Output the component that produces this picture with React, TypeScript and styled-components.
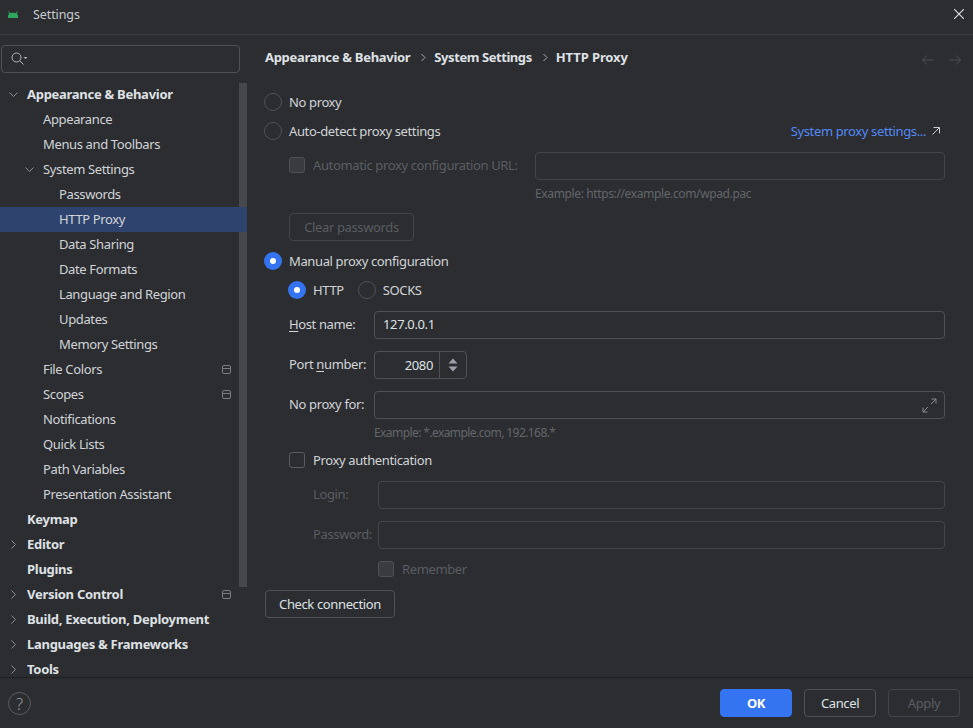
import React from "react";
import styled, { createGlobalStyle } from "styled-components";

const Global = createGlobalStyle`
  html, body { margin: 0; padding: 0; background: #2b2d30; }
  body { font-family: "Noto Sans", "Open Sans", "Liberation Sans", sans-serif; font-size: 13px; letter-spacing: -0.37px; color: #dfe1e5; }
  * { box-sizing: border-box; }
`;

const Window = styled.div`
  width: 973px; height: 728px; display: flex; flex-direction: column; overflow: hidden; background: #2b2d30;
`;
const TitleBar = styled.header`
  height: 35px; flex: none; display: flex; align-items: center; border-bottom: 1px solid #393b40; padding: 0 9px 6px 8px;
`;
const TitleText = styled.span`
  margin-left: 15px; font-size: 12.5px; letter-spacing: -0.1px; color: #c9cbd0; flex: 1;
`;
const Body = styled.div`
  flex: 1; min-height: 0; display: flex;
`;
const Sidebar = styled.aside`
  width: 247px; flex: none; display: flex; flex-direction: column; min-height: 0;
`;
const SearchBox = styled.div`
  margin: 10px 0 0 1px; width: 239px; height: 28px; flex: none; border: 1px solid #4e5157; border-radius: 4px; display: flex; align-items: center; padding-left: 9px;
`;
const TreeWrap = styled.div`
  position: relative; flex: 1; min-height: 0; overflow: hidden; margin-top: 9px;
`;
const ScrollThumb = styled.div`
  position: absolute; left: 239px; top: 1px; width: 8px; height: 504px; background: #47484b;
`;
const Row = styled.div<{ $depth: number; $selected?: boolean }>`
  position: relative; height: 25px; display: flex; align-items: center; padding: 0 0 2px ${(p) => 27 + p.$depth * 16}px;
  background: ${(p) => (p.$selected ? "#2e436e" : "transparent")};
  white-space: nowrap;
`;
const RowLabel = styled.span<{ $bold?: boolean }>`
  font-weight: ${(p) => (p.$bold ? 700 : 400)}; font-size: 13px; color: ${(p) => (p.$bold ? "#dfe1e5" : "#d2d4d9")};
  letter-spacing: ${(p) => (p.$bold ? "-0.28px" : "-0.37px")};
`;
const Chevron = styled.svg<{ $depth: number }>`
  position: absolute; left: ${(p) => 8 + p.$depth * 16}px; top: 7px;
`;
const BoxIcon = styled.svg`
  position: absolute; left: 222px; top: 8px;
`;
const Main = styled.main`
  flex: 1; min-width: 0; display: flex; flex-direction: column; padding: 0 28px 0 18px;
`;
const Breadcrumbs = styled.div`
  height: 20px; margin-top: 12px; flex: none; display: flex; align-items: center; font-weight: 700; color: #dfe1e5;
`;
const Crumb = styled.span<{ $spacing: number }>`
  letter-spacing: ${(p) => p.$spacing}px;
`;
const CrumbSep = styled.svg`
  margin: 0 8px 0 10px;
`;
const NavArrows = styled.div`
  margin-left: auto; margin-right: -17px; display: flex; gap: 13px; margin-top: 6px;
`;
const OptionRow = styled.div<{ $top: number; $indent?: number }>`
  display: flex; align-items: center; height: 20px; margin-top: ${(p) => p.$top}px; padding-left: ${(p) => p.$indent ?? 0}px; flex: none;
`;
const Radio = styled.span<{ $on?: boolean; $gap?: number }>`
  width: 18px; height: 18px; border-radius: 50%; flex: none; margin-left: ${(p) => p.$gap ?? -1}px; margin-right: 7px;
  display: inline-flex; align-items: center; justify-content: center;
  border: ${(p) => (p.$on ? "none" : "1.5px solid #4e5157")};
  background: ${(p) => (p.$on ? "#3574f0" : "transparent")};
  &::after { content: ""; width: 6px; height: 6px; border-radius: 50%; background: ${(p) => (p.$on ? "#ffffff" : "transparent")}; }
`;
const Check = styled.span<{ $off?: boolean }>`
  width: 16px; height: 16px; border-radius: 3px; flex: none; margin-right: 8px;
  border: 1px solid ${(p) => (p.$off ? "#4e5157" : "#5a5d63")};
  background: ${(p) => (p.$off ? "#393b40" : "transparent")};
`;
const Label = styled.span<{ $off?: boolean }>`
  color: ${(p) => (p.$off ? "#5a5d63" : "#d2d4d9")}; white-space: nowrap;
`;
const FieldLabel = styled(Label)`
  padding-bottom: 2px;
`;
const Spacer = styled.span`flex: 1;`;
const Link = styled.span`
  color: #548af7; display: inline-flex; align-items: center; gap: 6px; margin-right: 5px;
`;
const FieldRow = styled.div<{ $top: number; $indent: number; $label: number }>`
  display: grid; grid-template-columns: ${(p) => p.$label}px 1fr; align-items: center; height: 28px; flex: none;
  margin-top: ${(p) => p.$top}px; padding-left: ${(p) => p.$indent}px;
`;
const CheckField = styled.div`
  display: flex; align-items: center; padding-bottom: 2px;
`;
const Input = styled.div<{ $off?: boolean }>`
  height: 28px; border: 1px solid ${(p) => (p.$off ? "#43454a" : "#4e5157")}; border-radius: 4px; display: flex; align-items: center; padding: 0 8px 2px; color: #dfe1e5; position: relative;
`;
const Expand = styled.svg`
  position: absolute; right: 7px; top: 6px;
`;
const Spinner = styled.div`
  width: 93px; height: 28px; border: 1px solid #4e5157; border-radius: 4px; display: flex; align-items: stretch;
`;
const SpinValue = styled.span`
  flex: 1; display: flex; align-items: center; justify-content: flex-end; padding: 0 6px 1px 0; color: #dfe1e5;
`;
const SpinButton = styled.span`
  width: 27px; border-left: 1px solid #4e5157; display: flex; align-items: center; justify-content: center;
`;
const Hint = styled.div<{ $top: number; $indent: number; $spacing: number }>`
  height: 16px; line-height: 16px; font-size: 12px; color: #63666c; flex: none; letter-spacing: ${(p) => p.$spacing}px;
  margin-top: ${(p) => p.$top}px; padding-left: ${(p) => p.$indent}px; white-space: nowrap;
`;
const Button = styled.button<{ $off?: boolean; $primary?: boolean; $w: number }>`
  width: ${(p) => p.$w}px; height: 28px; padding: 0 0 1px; border-radius: 4px; font: inherit; letter-spacing: inherit; flex: none;
  border: 1px solid ${(p) => (p.$primary ? "#3574f0" : p.$off ? "#43454a" : "#4e5157")};
  background: ${(p) => (p.$primary ? "#3574f0" : "transparent")};
  color: ${(p) => (p.$primary ? "#ffffff" : p.$off ? "#5a5d63" : "#dfe1e5")};
  font-weight: ${(p) => (p.$primary ? 700 : 400)};
`;
const ButtonSlot = styled.div<{ $top: number; $indent: number }>`
  margin-top: ${(p) => p.$top}px; padding-left: ${(p) => p.$indent}px; flex: none;
`;
const Footer = styled.footer`
  height: 51px; flex: none; border-top: 1px solid #1e1f22; display: flex; align-items: center; padding: 0 13px 0 8px; gap: 12px;
`;
const Help = styled.span`
  width: 23px; height: 23px; border-radius: 50%; border: 1px solid #5a5d63; color: #9da0a8; display: flex; align-items: center; justify-content: center; font-size: 16px; font-weight: 300; margin-right: auto; margin-top: 1px;
`;
const Underlined = styled.span`text-decoration: underline; text-underline-offset: 2px;`;

const ChevronDown = ({ depth }: { depth: number }) => (
  <Chevron $depth={depth} width="11" height="11" viewBox="0 0 11 11" fill="none">
    <path d="M1.500 3.500 5.500 7.500 9.500 3.500" stroke="#8b8e94" strokeWidth="1" />
  </Chevron>
);
const ChevronRight = ({ depth }: { depth: number }) => (
  <Chevron $depth={depth} width="11" height="11" viewBox="0 0 11 11" fill="none">
    <path d="M3.500 1.500 7.500 5.500 3.500 9.500" stroke="#8b8e94" strokeWidth="1" />
  </Chevron>
);
const Box = () => (
  <BoxIcon width="10" height="10" viewBox="0 0 10 10" fill="none">
    <rect x="0.5" y="0.5" width="8" height="8" rx="1.5" stroke="#7a7d83" />
    <path d="M0.5 3.500h8" stroke="#7a7d83" />
  </BoxIcon>
);
const Sep = () => (
  <CrumbSep width="6" height="9" viewBox="0 0 6 9" fill="none">
    <path d="M1.500 1 5 4.500 1.500 8" stroke="#a8abb0" />
  </CrumbSep>
);

type Item = { label: string; depth: number; bold?: boolean; open?: boolean; closed?: boolean; selected?: boolean; box?: boolean };
const items: Item[] = [
  { label: "Appearance & Behavior", depth: 0, bold: true, open: true },
  { label: "Appearance", depth: 1 },
  { label: "Menus and Toolbars", depth: 1 },
  { label: "System Settings", depth: 1, open: true },
  { label: "Passwords", depth: 2 },
  { label: "HTTP Proxy", depth: 2, selected: true },
  { label: "Data Sharing", depth: 2 },
  { label: "Date Formats", depth: 2 },
  { label: "Language and Region", depth: 2 },
  { label: "Updates", depth: 2 },
  { label: "Memory Settings", depth: 2 },
  { label: "File Colors", depth: 1, box: true },
  { label: "Scopes", depth: 1, box: true },
  { label: "Notifications", depth: 1 },
  { label: "Quick Lists", depth: 1 },
  { label: "Path Variables", depth: 1 },
  { label: "Presentation Assistant", depth: 1 },
  { label: "Keymap", depth: 0, bold: true },
  { label: "Editor", depth: 0, bold: true, closed: true },
  { label: "Plugins", depth: 0, bold: true },
  { label: "Version Control", depth: 0, bold: true, closed: true, box: true },
  { label: "Build, Execution, Deployment", depth: 0, bold: true, closed: true },
  { label: "Languages & Frameworks", depth: 0, bold: true, closed: true },
  { label: "Tools", depth: 0, bold: true, closed: true },
];

export default function App() {
  return (
    <Window>
      <Global />
      <TitleBar>
        <svg width="10" height="7" viewBox="0 0 10 7" fill="#2fa65a">
          <path d="M0 7V4.500L1 3 .3 .6l.7-.3L2 2.200C3.200 1.700 6.800 1.700 8 2.200L9 .3l.7.3L9 3l1 1.500V7Z" />
        </svg>
        <TitleText>Settings</TitleText>
        <svg width="10" height="10" viewBox="0 0 10 10" fill="none">
          <path d="M0 0 10 10M10 0 0 10" stroke="#dfe1e5" strokeWidth="1.100" />
        </svg>
      </TitleBar>
      <Body>
        <Sidebar>
          <SearchBox>
            <svg width="17" height="14" viewBox="0 0 17 14" fill="none">
              <circle cx="5.500" cy="5.500" r="4.500" stroke="#b4b8bf" />
              <path d="M9 9l3.500 3.500" stroke="#b4b8bf" />
              <path d="M12.500 5h4L14.500 7Z" fill="#b4b8bf" />
            </svg>
          </SearchBox>
          <TreeWrap>
            <ScrollThumb />
            {items.map((it) => (
              <Row key={it.label} $depth={it.depth} $selected={it.selected}>
                {it.open && <ChevronDown depth={it.depth} />}
                {it.closed && <ChevronRight depth={it.depth} />}
                <RowLabel $bold={it.bold}>{it.label}</RowLabel>
                {it.box && <Box />}
              </Row>
            ))}
          </TreeWrap>
        </Sidebar>
        <Main>
          <Breadcrumbs>
            <Crumb $spacing={-0.3}>Appearance &amp; Behavior</Crumb>
            <Sep />
            <Crumb $spacing={-0.43}>System Settings</Crumb>
            <Sep />
            <Crumb $spacing={-0.1}>HTTP Proxy</Crumb>
            <NavArrows>
              <svg width="14" height="12" viewBox="0 0 14 12" fill="none">
                <path d="M13 6H1.500M6 1.500 1.500 6 6 10.500" stroke="#4e5157" />
              </svg>
              <svg width="14" height="12" viewBox="0 0 14 12" fill="none">
                <path d="M1 6h11.500M8 1.500 12.500 6 8 10.500" stroke="#4e5157" />
              </svg>
            </NavArrows>
          </Breadcrumbs>
          <OptionRow $top={25}><Radio /><Label>No proxy</Label></OptionRow>
          <OptionRow $top={9}>
            <Radio /><Label>Auto-detect proxy settings</Label>
            <Spacer />
            <Link>
              System proxy settings...
              <svg width="8" height="8" viewBox="0 0 8 8" fill="none">
                <path d="M.5 7.500 7 1M1.500 .5H7.500v6" stroke="#c9cbd0" />
              </svg>
            </Link>
          </OptionRow>
          <FieldRow $top={11} $indent={24} $label={246}>
            <CheckField><Check $off /><Label $off>Automatic proxy configuration URL:</Label></CheckField>
            <Input $off />
          </FieldRow>
          <Hint $top={6} $indent={270} $spacing={-0.37}>Example: https://example.com/wpad.pac</Hint>
          <ButtonSlot $top={11} $indent={24}><Button $off $w={125}>Clear passwords</Button></ButtonSlot>
          <OptionRow $top={10}><Radio $on /><Label>Manual proxy configuration</Label></OptionRow>
          <OptionRow $top={9} $indent={24}>
            <Radio $on /><Label>HTTP</Label>
            <Radio $gap={14} /><Label>SOCKS</Label>
          </OptionRow>
          <FieldRow $top={11} $indent={24} $label={85}>
            <FieldLabel><Underlined>H</Underlined>ost name:</FieldLabel>
            <Input>127.0.0.1</Input>
          </FieldRow>
          <FieldRow $top={12} $indent={24} $label={85}>
            <FieldLabel>Port <Underlined>n</Underlined>umber:</FieldLabel>
            <Spinner>
              <SpinValue>2080</SpinValue>
              <SpinButton>
                <svg width="10" height="16" viewBox="0 0 10 16" fill="#9da0a8">
                  <path d="M5 1.500 9.500 6.500H.5ZM5 14.500.5 9.500h9Z" />
                </svg>
              </SpinButton>
            </Spinner>
          </FieldRow>
          <FieldRow $top={12} $indent={24} $label={85}>
            <FieldLabel>No proxy for:</FieldLabel>
            <Input>
              <Expand width="15" height="15" viewBox="0 0 15 15" fill="none">
                <path d="M9 6l5-5M9.500 1H14v4.500M6 9l-5 5M1 9.500V14h4.500" stroke="#868a91" />
              </Expand>
            </Input>
          </FieldRow>
          <Hint $top={6} $indent={109} $spacing={-0.58}>Example: *.example.com, 192.168.*</Hint>
          <OptionRow $top={9} $indent={24}><Check /><Label>Proxy authentication</Label></OptionRow>
          <FieldRow $top={11} $indent={48} $label={65}>
            <FieldLabel $off>Login:</FieldLabel>
            <Input $off />
          </FieldRow>
          <FieldRow $top={12} $indent={48} $label={65}>
            <FieldLabel $off>Password:</FieldLabel>
            <Input $off />
          </FieldRow>
          <OptionRow $top={10} $indent={113}><Check $off /><Label $off>Remember</Label></OptionRow>
          <ButtonSlot $top={11} $indent={0}><Button $w={130}>Check connection</Button></ButtonSlot>
        </Main>
      </Body>
      <Footer>
        <Help>?</Help>
        <Button $primary $w={72}>OK</Button>
        <Button $w={72}>Cancel</Button>
        <Button $off $w={72}>Apply</Button>
      </Footer>
    </Window>
  );
}
